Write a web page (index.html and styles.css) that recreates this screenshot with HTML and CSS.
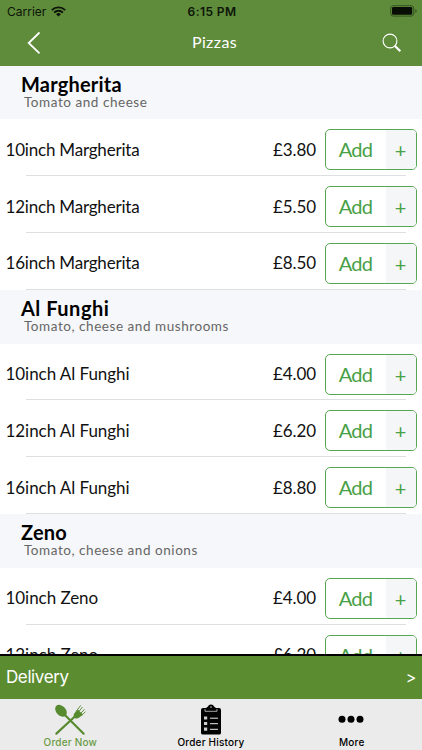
FILE: index.html
```
<!DOCTYPE html>
<html lang="en">
<head>
<meta charset="utf-8">
<title>Pizzas</title>
<link rel="stylesheet" href="styles.css">
</head>
<body>
<div class="app">
  <header class="top">
    <div class="status">
      <div class="carrier"><span>Carrier</span>
        <svg width="15" height="11" viewBox="0 0 15 11"><g fill="none" stroke="#0d1408" stroke-width="1.9"><path d="M.8 4.1a9.5 9.5 0 0 1 13.4 0"/><path d="M3.1 6.6a6.2 6.2 0 0 1 8.8 0"/></g><path d="M7.5 10.6 5.1 8.2a3.4 3.4 0 0 1 4.8 0z" fill="#0d1408"/></svg>
      </div>
      <div class="time">6:15 PM</div>
      <svg class="battery" width="27" height="12" viewBox="0 0 27 12"><rect x=".7" y=".7" width="23" height="10.4" rx="2.5" fill="none" stroke="#35521f" stroke-width="1"/><rect x="2" y="2" width="20.2" height="7.8" rx="1.3" fill="#080d05"/><path d="M25.3 4v4q1.4-.6 1.4-2t-1.4-2z" fill="#35521f"/></svg>
    </div>
    <nav class="nav">
      <svg width="14" height="24" viewBox="0 0 14 24"><path d="M12.5 1.5 1.7 12l10.8 10.3" fill="none" stroke="#fff" stroke-width="1.8"/></svg>
      <h1>Pizzas</h1>
      <svg width="20" height="20" viewBox="0 0 20 20"><circle cx="8" cy="8" r="6.9" fill="none" stroke="#fff" stroke-width="1.1"/><path d="m12.8 12.8 5.5 5.5" stroke="#fff" stroke-width="2.2"/></svg>
    </nav>
  </header>
  <main class="menu">
    <section class="margherita">
      <div class="head"><h2>Margherita</h2><p>Tomato and cheese</p></div>
      <div class="row"><span class="name">10inch Margherita</span><span class="price">£3.80</span><button><span>Add</span><i>+</i></button></div>
      <div class="row"><span class="name">12inch Margherita</span><span class="price">£5.50</span><button><span>Add</span><i>+</i></button></div>
      <div class="row"><span class="name">16inch Margherita</span><span class="price">£8.50</span><button><span>Add</span><i>+</i></button></div>
    </section>
    <section class="funghi">
      <div class="head"><h2>Al Funghi</h2><p>Tomato, cheese and mushrooms</p></div>
      <div class="row"><span class="name">10inch Al Funghi</span><span class="price">£4.00</span><button><span>Add</span><i>+</i></button></div>
      <div class="row"><span class="name">12inch Al Funghi</span><span class="price">£6.20</span><button><span>Add</span><i>+</i></button></div>
      <div class="row"><span class="name">16inch Al Funghi</span><span class="price">£8.80</span><button><span>Add</span><i>+</i></button></div>
    </section>
    <section>
      <div class="head"><h2>Zeno</h2><p>Tomato, cheese and onions</p></div>
      <div class="row"><span class="name">10inch Zeno</span><span class="price">£4.00</span><button><span>Add</span><i>+</i></button></div>
      <div class="row"><span class="name">12inch Zeno</span><span class="price">£6.20</span><button><span>Add</span><i>+</i></button></div>
    </section>
  </main>
  <div class="delivery"><span>Delivery</span><span class="go">&gt;</span></div>
  <footer class="tabs">
    <div class="tab active">
      <svg width="34" height="34" viewBox="0 0 34 34"><g fill="#588b30"><ellipse cx="7.4" cy="7.2" rx="5.1" ry="7.2" transform="rotate(-43 7.4 7.2)"/><path d="m21.2 10.400 4-4.600 5.600 5.400-4.600 3.800q-2.800 1-4.500-.5-1.500-1.500-.5-4.100z"/></g><g stroke="#588b30" fill="none"><path d="m10 10 21.500 21.500M23 12.500 2.500 31.500" stroke-width="2.300" stroke-linecap="round"/><path d="m23.500 8 4.800-6.500M25.400 9.200l4.900-6M27.400 11l5-5.300M29 12.600l4.500-4.500" stroke-width="1"/></g></svg>
      <span>Order Now</span>
    </div>
    <div class="tab">
      <svg width="22" height="32" viewBox="0 0 22 32"><path d="M3 4h3l2-1.500Q8.500.5 11 .5t3 2L16 4h3q2 0 2 2v23q0 1.500-2 1.500H3q-2 0-2-1.500V6q0-2 2-2z" fill="#000"/><g fill="none" stroke="#ebebeb"><path d="M5 5v2.300h12V5" stroke-width=".7"/><path d="M10 14.200h8M10 19.700h8M10 25.300h8" stroke-width="1"/></g><path d="M4 12.400h3.200v3.200H4zM4 17.900h3.200v3.200H4zM4 23.500h3.200v3.200H4z" fill="#ccc"/><circle cx="11" cy="3.100" r=".8" fill="#bbb"/></svg>
      <span>Order History</span>
    </div>
    <div class="tab">
      <svg width="26" height="32" viewBox="0 0 26 32"><circle cx="4" cy="15.300" r="3.500"/><circle cx="13" cy="15.300" r="3.500"/><circle cx="22" cy="15.300" r="3.500"/></svg>
      <span>More</span>
    </div>
  </footer>
</div>
</body>
</html>
```
FILE: styles.css
```
* { box-sizing: border-box; }
body { margin: 0; font-family: Lato, sans-serif; color: #111; }
h1, h2, p { margin: 0; font-weight: 400; }
svg { display: block; flex: none; }
.app { width: 422px; height: 750px; display: flex; flex-direction: column; overflow: hidden; background: #fff; }
.top { flex: none; height: 65.500px; background: #5f8c3b; }
.status { height: 22px; display: grid; grid-template-columns: 1fr auto 1fr; align-items: center; padding: 0 6px 0 7px; font: 12px Inter, sans-serif; color: #0d1408; }
.carrier { display: flex; align-items: center; gap: 5px; letter-spacing: 0; }
.time { font-weight: 600; letter-spacing: .4px; margin-left: 1px; }
.battery { justify-self: end; margin-right: -1px; }
.nav { height: 42px; display: flex; align-items: center; justify-content: space-between; padding: 0 20px 0 27px; color: #fff; }
.nav h1 { font-size: 16px; letter-spacing: .4px; margin: -3px 0 0 6px; }
.menu { flex: 1; min-height: 0; overflow: hidden; }
.head { height: 53.900px; background: #f6f7fa; padding: 6px 0 0 21px; }
.head h2 { font-size: 20px; line-height: 24px; font-weight: 700; color: #000; letter-spacing: .2px; }
.funghi h2 { letter-spacing: .5px; }
.head p { font-size: 13.500px; line-height: 14px; color: #666; margin: -1px 0 0 3px; letter-spacing: .55px; }
.row { height: 56.800px; display: flex; align-items: center; padding: 4px 5.500px 0 5.500px; background: linear-gradient(#dedfe1, #dedfe1) 26px 100% / 380px 1px no-repeat; font-size: 17px; }
.name { flex: 1; letter-spacing: -.05px; margin-top: -1px; }
.margherita .name { letter-spacing: -.2px; }
.price { margin: -1px 8.500px 0 0; letter-spacing: -.1px; }
button { width: 92px; height: 41px; display: flex; padding: 0; border: 1px solid #57a653; border-radius: 5px; overflow: hidden; background: #fff; color: #48a047; font: 20px Lato, sans-serif; }
button span { flex: 1; line-height: 39px; letter-spacing: -.7px; }
button i { width: 30px; height: 39px; background: #f4f6f8; font: 20px/40px Lato, sans-serif; }
.delivery { flex: none; height: 45px; border-top: 2.500px solid #000; background: #5b8c30; color: #fff; display: flex; align-items: center; justify-content: space-between; padding: 0 6px; font: 17px Inter, sans-serif; letter-spacing: -.4px; }
.go { font-size: 16px; }
.tabs { flex: none; height: 51.500px; background: #ebebeb; display: flex; justify-content: space-between; }
.tab { width: 140.600px; display: flex; flex-direction: column; align-items: center; padding-top: 5px; font: 500 10px/12px Inter, sans-serif; color: #000; letter-spacing: .2px; }
.tab svg { height: 32px; margin: 0 1px 0 0; }
.active { color: #6b9b46; }
```
